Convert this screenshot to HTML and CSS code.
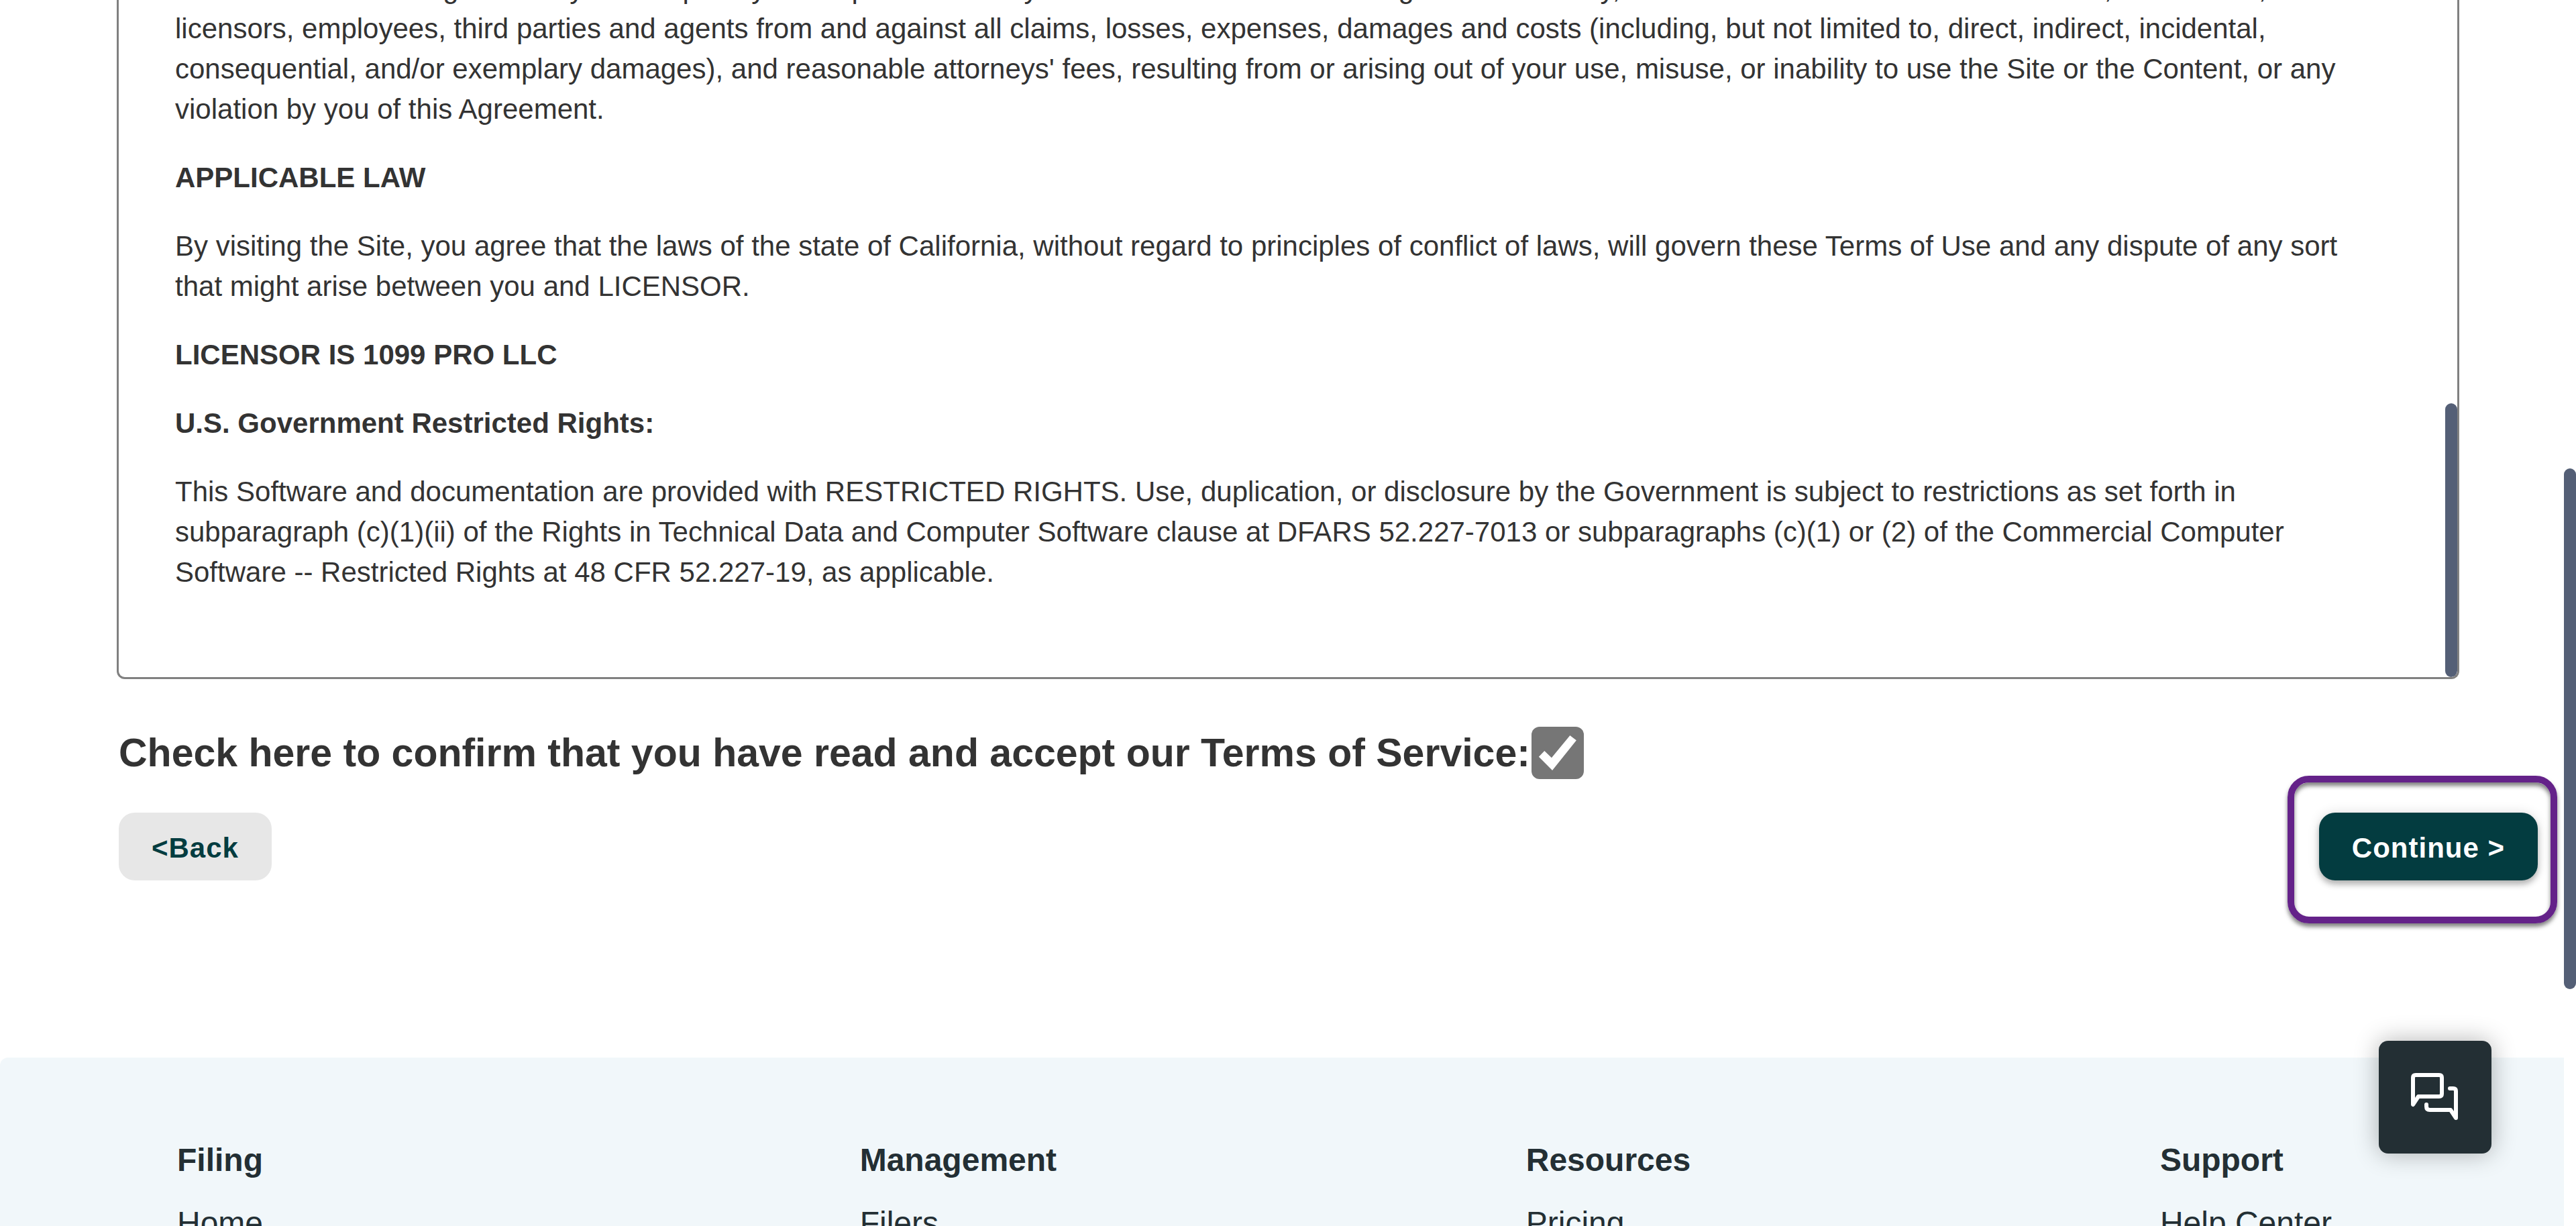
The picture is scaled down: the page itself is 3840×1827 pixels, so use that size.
FILE: index.html
```html
<!DOCTYPE html>
<html lang="en">
<head>
    <meta charset="UTF-8">
    <meta name="viewport" content="width=device-width, initial-scale=1.0">
    <title>Terms of Service</title>
    <link rel="stylesheet" href="styles.css">
</head>
<body>
    <main class="page">
        <section class="terms" id="terms">
            <p>As a condition of using the Site you accept only terms posted here by us or the owner of the Site agree to indemnify, defend and hold harmless LICENSOR, its affiliates, licensors, employees, third parties and agents from and against all claims, losses, expenses, damages and costs (including, but not limited to, direct, indirect, incidental, consequential, and/or exemplary damages), and reasonable attorneys' fees, resulting from or arising out of your use, misuse, or inability to use the Site or the Content, or any violation by you of this Agreement.</p>
            <h3>APPLICABLE LAW</h3>
            <p>By visiting the Site, you agree that the laws of the state of California, without regard to principles of conflict of laws, will govern these Terms of Use and any dispute of any sort that might arise between you and LICENSOR.</p>
            <h3>LICENSOR IS 1099 PRO LLC</h3>
            <h3>U.S. Government Restricted Rights:</h3>
            <p>This Software and documentation are provided with RESTRICTED RIGHTS. Use, duplication, or disclosure by the Government is subject to restrictions as set forth in subparagraph (c)(1)(ii) of the Rights in Technical Data and Computer Software clause at DFARS 52.227-7013 or subparagraphs (c)(1) or (2) of the Commercial Computer Software -- Restricted Rights at 48 CFR 52.227-19, as applicable.</p>
            <div class="scroll-thumb terms-thumb"></div>
        </section>

        <div class="confirm">
            <label for="accept">Check here to confirm that you have read and accept our Terms of Service:</label>
            <input type="checkbox" id="accept" class="check" checked>
        </div>

        <div class="actions">
            <button type="button" class="btn back">&lt;Back</button>
            <div class="highlight">
                <button type="button" class="btn continue">Continue &gt;</button>
            </div>
        </div>
    </main>

    <footer class="footer">
        <div class="footer-col">
            <h2>Filing</h2>
            <a href="#">Home</a>
        </div>
        <div class="footer-col">
            <h2>Management</h2>
            <a href="#">Filers</a>
        </div>
        <div class="footer-col">
            <h2>Resources</h2>
            <a href="#">Pricing</a>
        </div>
        <div class="footer-col">
            <h2>Support</h2>
            <a href="#">Help Center</a>
        </div>
    </footer>

    <button type="button" class="chat" aria-label="Open chat">
        <svg viewBox="0 0 72 72" width="72" height="72" fill="none" stroke="#ffffff" stroke-width="6" stroke-linecap="round" stroke-linejoin="round">
            <path d="M3 47V7q0-4 4-4H42q4 0 4 4V31q0 4-4 4H11L3 47Z"/>
            <path d="M58 23h5q4 0 4 4V67L59 55H28q-5 0-5-5V47"/>
        </svg>
    </button>
    <div class="scroll-thumb page-thumb"></div>
</body>
</html>
```
FILE: styles.css
```css
* {
    box-sizing: border-box;
}

body {
    font-family: "Liberation Sans", Arial, sans-serif;
    margin: 0;
    height: 100vh;
    overflow: hidden;
    display: flex;
    flex-direction: column;
    background: #ffffff;
    color: #333333;
}

.page {
    flex: none;
    padding: 0 57px 0 174px;
}

/* agreement box, scrolled to its end */
.terms {
    position: relative;
    height: 1012px;
    margin-right: 117px;
    padding: 0 160px 126px 84px;
    border: 3px solid #808080;
    border-top: none;
    border-radius: 0 0 12px 12px;
    overflow: hidden;
    display: flex;
    flex-direction: column;
    justify-content: flex-end;
    gap: 42px;
    font-size: 42px;
    line-height: 60px;
}

.terms p,
.terms h3 {
    flex: none;
    margin: 0;
    font-size: 42px;
}

.scroll-thumb {
    position: absolute;
    width: 18px;
    border-radius: 9px;
    background: #545f76;
}

.terms-thumb {
    right: 0;
    bottom: 0;
    height: 408px;
}

.page-thumb {
    top: 698px;
    right: 0;
    height: 776px;
}

.confirm {
    display: flex;
    align-items: center;
    gap: 2px;
    margin-top: 71px;
    padding-left: 3px;
    font-size: 59px;
    line-height: 78px;
    font-weight: bold;
}

.check {
    appearance: none;
    flex: none;
    width: 78px;
    height: 78px;
    margin: 0;
    border-radius: 12px;
    background: #767676;
    display: grid;
    place-items: center;
}

.check:checked::before {
    content: "";
    width: 56px;
    height: 52px;
    background: #ffffff;
    clip-path: polygon(0 61%, 15% 44%, 34% 64%, 83% 0, 100% 14%, 36% 100%);
}

.actions {
    display: flex;
    justify-content: space-between;
    margin-top: 50px;
    padding-left: 3px;
}

.btn {
    height: 101px;
    padding: 4px 49px 0;
    border: none;
    border-radius: 24px;
    font-family: inherit;
    font-size: 42px;
    font-weight: bold;
    letter-spacing: 1px;
    cursor: pointer;
}

.back {
    background: #e7e7e7;
    color: #033c40;
}

.continue {
    background: #033c40;
    color: #ffffff;
    box-shadow: 0 6px 8px rgba(0, 0, 0, 0.25), 0 0 18px rgba(0, 0, 0, 0.12);
}

/* purple frame around the next step */
.highlight {
    position: relative;
}

.highlight::after {
    content: "";
    position: absolute;
    inset: -55px -29px -64px -47px;
    border: 10px solid #642289;
    border-radius: 32px;
    box-shadow: 0 5px 6px rgba(0, 0, 0, 0.5), inset 0 5px 6px rgba(0, 0, 0, 0.5);
    pointer-events: none;
}

.footer {
    flex: 1;
    display: flex;
    justify-content: space-between;
    margin-top: 264px;
    margin-right: 18px;
    padding: 124px 346px 0 264px;
    border-radius: 12px 0 0 0;
    background: #f1f7fa;
    color: #232f34;
}

.footer-col {
    display: flex;
    flex-direction: column;
    gap: 35px;
}

.footer-col:first-child {
    min-width: 318px;
}

.footer h2 {
    margin: 0;
    font-size: 48px;
    line-height: 58px;
}

.footer a {
    font-size: 48px;
    line-height: 60px;
    color: #232f34;
    text-decoration: none;
}

.chat {
    position: fixed;
    right: 126px;
    bottom: 108px;
    width: 168px;
    height: 168px;
    padding: 0;
    border: none;
    border-radius: 14px;
    background: #232f34;
    box-shadow: 0 0 36px rgba(0, 0, 0, 0.3);
    display: grid;
    place-items: center;
    cursor: pointer;
}
```
